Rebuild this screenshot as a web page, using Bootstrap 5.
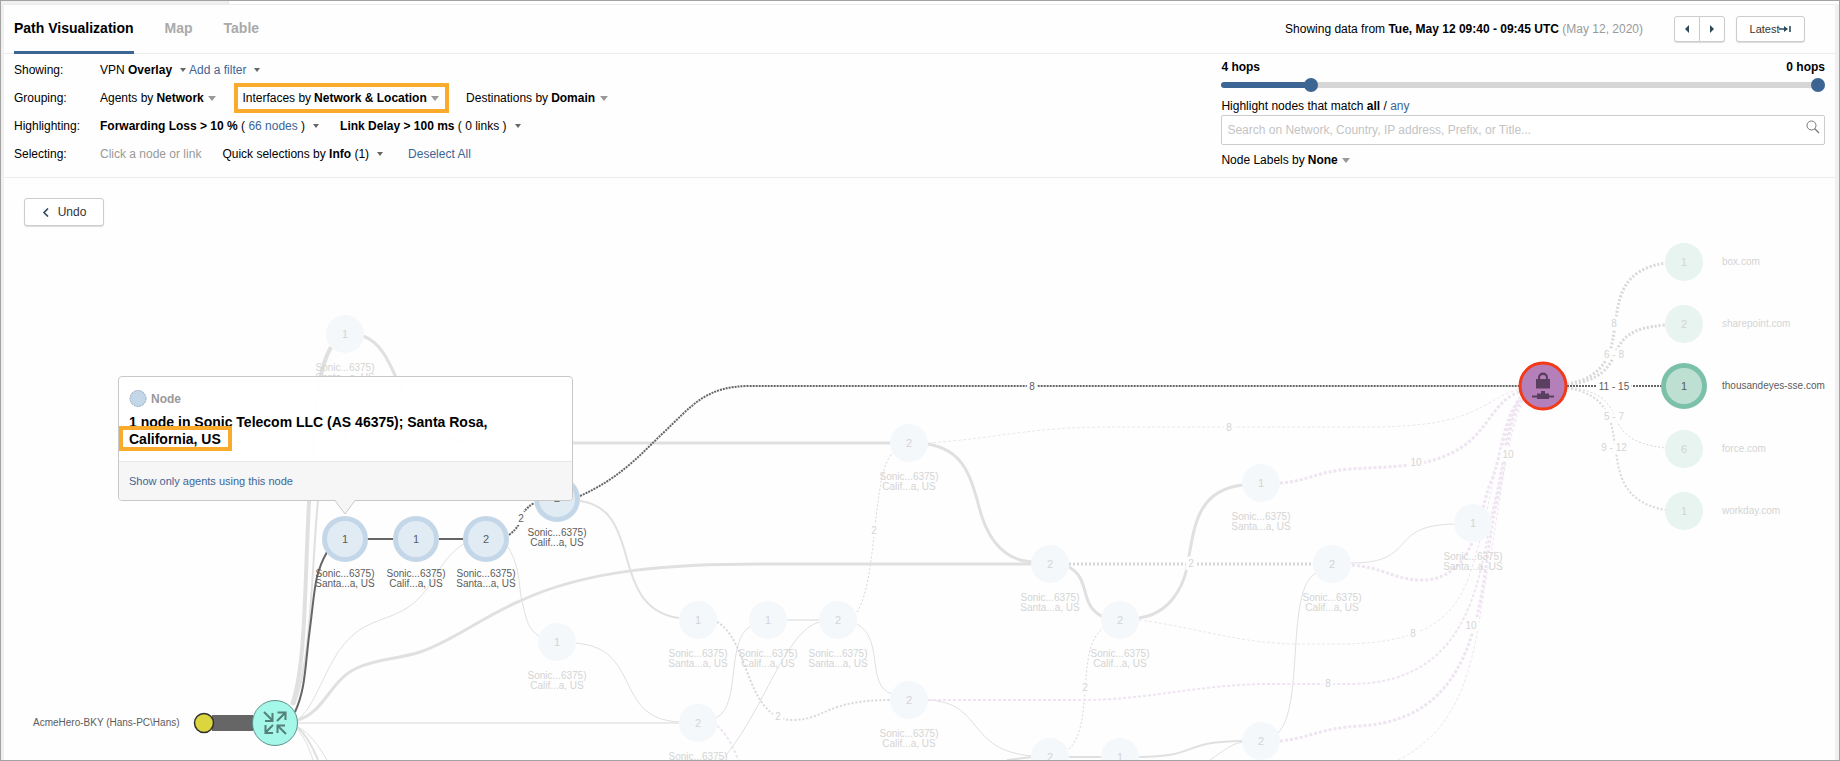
<!DOCTYPE html>
<html lang="en">
<head>
<meta charset="utf-8">
<meta name="viewport" content="width=device-width, initial-scale=1">
<title>Path Visualization</title>
<link rel="stylesheet" href="https://cdn.jsdelivr.net/npm/bootstrap@5.3.0/dist/css/bootstrap.min.css">
<script src="https://cdn.jsdelivr.net/npm/bootstrap@5.3.0/dist/js/bootstrap.bundle.min.js"></script>
<style>
  :root { --accent: #3d6594; --rule: #ebebeb; --mark: #fbab2c; }
  body { font-family: "Liberation Sans", Arial, sans-serif; font-size: 12px; line-height: 16px; color: #000; background: #fff; }
  a, .linkish, .pick.linkish { color: var(--accent); text-decoration: none; }
  .hint { color: #999; }
  .frame { border: 1px solid #a3a3a3; background: #f0f0f0; }
  .top-strip { height: 3px; margin-left: 227px; background: #fff; border-left: 1px solid #e4e4e4; }
  .panel { margin: 0 4px 0 3px; background: #fefefe; border-top: 1px solid var(--rule); }
  .tab-bar { height: 49px; border-bottom: 1px solid var(--rule); padding: 0 30px 0 10px; }
  .view-tabs { gap: 31px; }
  .view-tabs .nav-link { display: flex; align-items: flex-start; height: 49px; padding: 14px 0 0; border: 0; border-bottom: 3px solid transparent; border-radius: 0; background: none; font-size: 14px; font-weight: bold; line-height: 18px; color: #aaa; }
  .view-tabs .nav-link.active { color: #000; border-color: var(--accent); }
  .time-tools { gap: 11px; }
  .tool-btn { --bs-btn-padding-y: 0; --bs-btn-padding-x: 0; --bs-btn-font-size: 12px; --bs-btn-line-height: 16px; --bs-btn-color: #333; --bs-btn-bg: #fff; --bs-btn-border-color: #ccc; --bs-btn-border-radius: 3px; --bs-btn-hover-border-color: #aaa; box-shadow: 0 1px 1px #ddd; display: inline-flex; align-items: center; justify-content: center; }
  .step-btn { width: 26px; height: 26px; }
  .latest-btn { width: 69px; height: 26px; font-size: 11px; }
  .filters { border-bottom: 1px solid var(--rule); padding: 0 10px; }
  .filter-rows { padding: 2px 0 9px; }
  .filter-row { height: 28px; display: flex; align-items: center; }
  .row-name { width: 86px; flex: none; }
  .picks { display: flex; align-items: center; gap: 21px; }
  .picks.tight { gap: 3px; }
  .pick { display: inline-flex; align-items: center; border: 0; padding: 0; background: none; color: #000; white-space: pre; line-height: 16px; }
  .pick select { appearance: none; border: 0; padding: 0; margin: 0; background: none; color: #000; font-weight: bold; line-height: 16px; }
  .pick label { margin-right: 3px; }
  .pick::after { content: ""; margin-left: 4px; border: 4px solid transparent; border-top: 5px solid #999; border-bottom: 0; }
  .pick.small-caret::after { margin-left: 8px; border-width: 4px 3px 0; border-top-color: #666; }
  .pick.ringed { border: 4px solid var(--mark); padding: 3px 6px 3px 4px; height: 30px; margin: 0 -4px 0 -3px; }
  .side { flex: 0 0 604px; flex-basis: calc(33% + 6px); padding-top: 5px; }
  .hops { display: grid; height: 20px; align-items: center; }
  .hops > * { grid-area: 1 / 1; }
  .hops .track { height: 6px; border-radius: 3px; background: linear-gradient(90deg, var(--accent) var(--from), #d6d6d6 var(--from)); }
  .hops input { appearance: none; width: 100%; height: 14px; margin: 0; background: none; pointer-events: none; }
  .hops input::-webkit-slider-thumb { appearance: none; width: 14px; height: 14px; border: 0; border-radius: 50%; background: var(--accent); pointer-events: auto; }
  .match-line { height: 20px; padding-top: 2px; }
  .search-box { height: 30px; border: 1px solid #ccc; border-radius: 2px; background: #fff; padding: 0 4px 0 5px; }
  .search-box input { border: 0; outline: 0; padding: 0; background: none; font-size: 12px; }
  .search-box input::placeholder { color: #c4c4c4; opacity: 1; }
  .labels-by { margin-top: 7px; }
  .canvas svg.graph { display: block; width: 100%; height: auto; }
  .undo-btn { left: 20px; top: 20px; width: 80px; height: 28px; }
  .graph { fill: #5c5c5c; }
  .graph text { font-size: 10px; text-anchor: middle; }
  .graph .num text { font-size: 11px; }
  .graph .dim { fill: #d4d4d4; }
  .graph .gap text { stroke: #fefefe; stroke-width: 6px; paint-order: stroke; }
  .graph .start text { text-anchor: start; }
  .node-tip { left: 114px; top: 198px; width: 455px; height: 125px; border: 1px solid #c8c8c8; border-radius: 4px; background: rgba(255,255,255,.95); }
  .tip-main { height: 85px; padding: 13px 10px 0; border-bottom: 1px solid #e8e8e8; }
  .tip-kind { font-weight: bold; color: #999; }
  .tip-title { font-size: 14px; line-height: 17px; font-weight: bold; margin: 7px 60px 0 0; }
  .tip-title span { box-shadow: 0 0 0 4px var(--mark); margin-left: -6px; padding: 1px 7px 0 6px; }
  .tip-foot { height: 38px; padding: 0 10px; background: #f6f6f6; font-size: 11px; border-radius: 0 0 3px 3px; }
  .tip-arrow { left: 216px; top: 122px; }
</style>
</head>
<body>
<div class="frame overflow-hidden">
  <div class="top-strip"></div>
  <main class="panel">
    <header class="tab-bar d-flex justify-content-between">
      <ul class="nav view-tabs" role="tablist">
        <li class="nav-item"><button class="nav-link active" type="button" role="tab" aria-selected="true">Path Visualization</button></li>
        <li class="nav-item"><button class="nav-link" type="button" role="tab">Map</button></li>
        <li class="nav-item"><button class="nav-link" type="button" role="tab">Table</button></li>
      </ul>
      <div class="time-tools d-flex align-items-center">
        <span class="me-3">Showing data from <b>Tue, May 12 09:40 - 09:45 UTC</b> <span class="hint">(May 12, 2020)</span></span>
        <div class="btn-group ms-1" role="group" aria-label="Step through time">
          <button class="btn tool-btn step-btn" type="button" aria-label="Previous"><svg width="6" height="8"><path d="M5 0V8L1 4Z" fill="#2c4a58"/></svg></button>
          <button class="btn tool-btn step-btn" type="button" aria-label="Next"><svg width="6" height="8"><path d="M1 0V8L5 4Z" fill="#2c4a58"/></svg></button>
        </div>
        <button class="btn tool-btn latest-btn" type="button">Latest<svg width="12" height="8"><path d="M0 4H8M11 1V7" stroke="#2c4a58" stroke-width="1.6"/><path d="M5 1L9 4L5 7Z" fill="#2c4a58"/></svg></button>
      </div>
    </header>

    <section class="filters d-flex justify-content-between">
      <div class="filter-rows">
        <div class="filter-row"><span class="row-name">Showing:</span>
          <div class="picks tight">
            <button class="pick small-caret" type="button">VPN <b>Overlay</b></button>
            <button class="pick small-caret linkish" type="button">Add a filter</button>
          </div></div>
        <div class="filter-row"><span class="row-name">Grouping:</span>
          <div class="picks">
            <span class="pick"><label for="agents">Agents by</label><select id="agents"><option>Network</option></select></span>
            <span class="pick ringed"><label for="ifaces">Interfaces by</label><select id="ifaces"><option>Network &amp; Location</option></select></span>
            <span class="pick"><label for="dests">Destinations by</label><select id="dests"><option>Domain</option></select></span>
          </div></div>
        <div class="filter-row"><span class="row-name">Highlighting:</span>
          <div class="picks">
            <button class="pick small-caret" type="button"><b>Forwarding Loss &gt; 10 %</b> ( <span class="linkish">66 nodes</span> )</button>
            <button class="pick small-caret" type="button"><b>Link Delay &gt; 100 ms</b> ( 0 links )</button>
          </div></div>
        <div class="filter-row"><span class="row-name">Selecting:</span>
          <div class="picks">
            <span class="hint">Click a node or link</span>
            <button class="pick small-caret" type="button">Quick selections by <b>Info</b> (1)</button>
            <a class="ms-1" href="#">Deselect All</a>
          </div></div>
      </div>
      <div class="side">
        <div class="d-flex justify-content-between fw-bold"><span>4 hops</span><span>0 hops</span></div>
        <div class="hops">
          <div class="track" style="--from:14%"></div>
          <input type="range" min="0" max="100" value="14" aria-label="Hops from agents">
          <input type="range" min="0" max="100" value="100" aria-label="Hops from destinations">
        </div>
        <div class="match-line d-flex align-items-center"><label for="q">Highlight nodes that match <b>all</b> / <a href="#">any</a></label></div>
        <div class="search-box d-flex">
          <input id="q" class="flex-grow-1" type="search" placeholder="Search on Network, Country, IP address, Prefix, or Title...">
          <svg class="mt-1" width="14" height="14" fill="none" stroke="#777"><circle cx="5.5" cy="5.5" r="4.5"/><path d="M8.5 8.5L13 13" stroke-width="1.3"/></svg>
        </div>
        <div class="pick labels-by"><label for="nlabels">Node Labels by</label><select id="nlabels"><option>None</option></select></div>
      </div>
    </section>

    <section class="canvas position-relative">
      <svg class="graph" viewBox="4 178 1831 582" role="img" aria-label="Network path graph">
        <defs>
          <circle id="hop" r="19" fill="#f4f8fb"/>
          <circle id="dest" r="19" fill="#e7f4f0"/>
          <circle id="lit" r="20.5" fill="#e1ebf4" stroke="#c3d7e8" stroke-width="5"/>
          <g id="santa"><text y="37">Sonic...6375)</text><text y="47">Santa...a, US</text></g>
          <g id="calif"><text y="37">Sonic...6375)</text><text y="47">Calif...a, US</text></g>
        </defs>

        <!-- solid links that are not selected -->
        <g fill="none" stroke="#e0e0e0">
          <path stroke-width="4" d="M292 705C308 660 304 560 311 470C316 400 318 370 331 347"/>
          <path stroke-width="2" d="M294 705C312 660 312 560 318 500C322 470 322 452 329 443M363 437C385 442 395 450 404 464"/>
          <path stroke-width="3" d="M363 336C386 344 393 374 405 397S440 443 480 443H891"/>
          <path d="M298 720C320 700 325 660 353 635C370 620 388 620 407 608C435 590 435 562 465 543"/>
          <path stroke-width="3" d="M298 720C325 712 330 680 357 668C380 658 395 660 420 652C455 640 480 618 520 601C590 568 680 564 760 564H1032"/>
          <path stroke="#ebebeb" stroke-width="2" d="M298 723H679M787 620H820"/>
          <path stroke-width="2" d="M297 727C307 735 313 748 318 760"/>
          <path d="M297 729C305 738 309 748 313 760M298 727C310 733 320 748 327 760"/>
          <path d="M508 547C522 570 518 590 523 605C527 624 530 630 539 636"/>
          <path stroke-width="2" d="M580 501C610 505 618 528 625 552C632 578 640 613 679 618"/>
          <path d="M576 643C608 646 617 662 627 682C637 702 645 720 679 722"/>
          <path d="M716 718C742 705 725 640 751 626"/>
          <path d="M722 760C765 710 785 630 820 622"/>
          <path d="M857 624C885 640 865 685 892 694"/>
          <path d="M928 700C985 703 965 750 1032 756"/>
          <path stroke-width="3" d="M928 444C963 450 970 475 978 503C985 533 1000 560 1032 562"/>
          <path stroke-width="3" d="M1069 567C1092 580 1078 605 1103 617"/>
          <path stroke-width="3" d="M1139 618C1168 614 1182 590 1187 568C1194 530 1195 490 1243 485"/>
          <path d="M1351 563C1420 563 1385 525 1455 524"/>
          <path d="M1278 733C1305 705 1285 590 1316 573"/>
          <path stroke-width="2" d="M1007 760L1032 757H1139C1200 757 1180 741 1243 741"/>
          <path d="M1210 760C1222 752 1230 744 1243 742"/>
        </g>
        <!-- dashed links that are not selected -->
        <g fill="none" stroke="#d8d8d8" stroke-dasharray="2 2">
          <path stroke-width="2" d="M717 622C750 640 745 720 793 720C825 720 825 700 891 700"/>
          <path d="M857 612C878 580 872 470 893 453"/>
          <path stroke-width="3" d="M1069 564H1314"/>
          <path d="M1069 749C1095 725 1075 645 1104 628"/>
          <path stroke-width="3" d="M1567 384C1650 370 1580 275 1666 263"/>
          <path stroke-width="3" d="M1567 385C1640 375 1590 330 1666 325"/>
          <path d="M1567 387C1640 395 1590 440 1666 448"/>
          <path stroke-width="2" d="M1567 388C1650 400 1580 495 1666 510"/>
        </g>
        <!-- links that enter the tunnel -->
        <g fill="none" stroke="#efe4f1" stroke-dasharray="3 2">
          <path stroke-width="2" d="M717 726C725 732 733 745 738 760"/>
          <path stroke-width="2" d="M928 700H1080C1150 700 1200 684 1270 684H1350C1480 684 1480 560 1495 500C1507 450 1505 420 1521 398"/>
          <path d="M928 443C1000 438 1030 427 1110 427H1370C1480 427 1480 400 1520 389"/>
          <path stroke-width="3" d="M1280 483C1305 482 1315 472 1350 469C1380 467 1410 467 1430 461C1490 445 1485 405 1519 392"/>
          <path d="M1139 620C1200 628 1240 644 1300 644H1340C1460 644 1465 590 1480 540C1500 460 1500 420 1520 397"/>
          <path stroke-width="3" d="M1352 565C1385 568 1395 580 1422 580C1480 580 1480 500 1492 480C1505 440 1505 420 1520 398"/>
          <path stroke-width="3" d="M1280 741C1310 738 1320 728 1360 726C1490 718 1478 580 1497 500C1508 450 1508 420 1522 400"/>
          <path d="M1398 760C1480 720 1475 620 1490 560C1500 500 1508 430 1523 402"/>
        </g>
        <!-- the selected path -->
        <g fill="none" stroke="#666" stroke-width="2">
          <path d="M295 712C306 688 305 665 310 628C315 590 314 575 327 552M367 539H393M439 539H463"/>
          <path stroke-dasharray="2 1" d="M509 535C528 520 515 515 534 503M580 496C620 478 640 455 662 434C692 406 705 386 750 386H1519M1567 386H1662"/>
          <path stroke-width="16" d="M212 723H253"/>
        </g>

        <use href="#hop" x="345" y="334"/><use href="#hop" x="345" y="435"/><use href="#hop" x="557" y="642"/>
        <use href="#hop" x="698" y="620"/><use href="#hop" x="768" y="620"/><use href="#hop" x="838" y="620"/>
        <use href="#hop" x="698" y="723"/><use href="#hop" x="909" y="443"/><use href="#hop" x="909" y="700"/>
        <use href="#hop" x="1050" y="564"/><use href="#hop" x="1120" y="620"/><use href="#hop" x="1261" y="483"/>
        <use href="#hop" x="1332" y="564"/><use href="#hop" x="1473" y="523"/><use href="#hop" x="1261" y="741"/>
        <use href="#hop" x="1050" y="757"/><use href="#hop" x="1120" y="757"/>
        <use href="#dest" x="1684" y="262"/><use href="#dest" x="1684" y="324"/><use href="#dest" x="1684" y="449"/><use href="#dest" x="1684" y="511"/>
        <use href="#lit" x="345" y="539"/><use href="#lit" x="416" y="539"/><use href="#lit" x="486" y="539"/><use href="#lit" x="557" y="499"/>
        <circle cx="1684" cy="386" r="20.5" fill="#bde0d3" stroke="#7bc0a9" stroke-width="5"/>

        <g class="dim num">
          <text x="345" y="338">1</text><text x="345" y="439">1</text><text x="557" y="646">1</text><text x="698" y="624">1</text><text x="768" y="624">1</text><text x="838" y="624">2</text>
          <text x="698" y="727">2</text><text x="909" y="447">2</text><text x="909" y="704">2</text><text x="1050" y="568">2</text><text x="1120" y="624">2</text><text x="1261" y="487">1</text>
          <text x="1332" y="568">2</text><text x="1473" y="527">1</text><text x="1261" y="745">2</text><text x="1050" y="761">2</text><text x="1120" y="761">1</text>
          <text x="1684" y="266">1</text><text x="1684" y="328">2</text><text x="1684" y="453">6</text><text x="1684" y="515">1</text>
        </g>
        <g class="num">
          <text x="345" y="543">1</text><text x="416" y="543">1</text><text x="486" y="543">2</text><text x="557" y="502">2</text><text x="1684" y="390">1</text>
        </g>
        <g class="dim">
          <use href="#santa" x="345" y="334"/><use href="#calif" x="557" y="642"/><use href="#santa" x="698" y="620"/><use href="#calif" x="768" y="620"/><use href="#santa" x="838" y="620"/>
          <use href="#santa" x="698" y="723"/><use href="#calif" x="909" y="443"/><use href="#calif" x="909" y="700"/><use href="#santa" x="1050" y="564"/><use href="#calif" x="1120" y="620"/>
          <use href="#santa" x="1261" y="483"/><use href="#calif" x="1332" y="564"/><use href="#santa" x="1473" y="523"/>
        </g>
        <use href="#santa" x="345" y="540"/><use href="#calif" x="416" y="540"/><use href="#santa" x="486" y="540"/><use href="#calif" x="557" y="499"/>

        <g class="dim gap">
          <text x="778" y="720">2</text><text x="874" y="534">2</text><text x="1229" y="431">8</text><text x="1191" y="567">2</text><text x="1085" y="691">2</text>
          <text x="1328" y="687">8</text><text x="1413" y="637">8</text><text x="1416" y="466">10</text><text x="1508" y="458">10</text><text x="1471" y="629">10</text>
          <text x="1614" y="327">8</text><text x="1614" y="358">6 - 8</text><text x="1614" y="420">5 - 7</text><text x="1614" y="451">9 - 12</text>
        </g>
        <g class="gap"><text x="521" y="522">2</text><text x="1032" y="390">8</text><text x="1614" y="390">11 - 15</text></g>
        <g class="dim start"><text x="1722" y="265">box.com</text><text x="1722" y="327">sharepoint.com</text><text x="1722" y="452">force.com</text><text x="1722" y="514">workday.com</text></g>
        <g class="start"><text x="1722" y="389">thousandeyes-sse.com</text><text x="33" y="726">AcmeHero-BKY (Hans-PC\Hans)</text></g>

        <circle cx="204" cy="723" r="9.5" fill="#dbd63e" stroke="#2f2f2f" stroke-width="1.5"/>
        <circle cx="275" cy="723" r="22.5" fill="#a5f7e9" stroke="#5d8f88"/>
        <g fill="none" stroke="#557f79" stroke-width="2">
          <path d="M264 712L272 720M272.500 713V721H265"/>
          <path d="M277 721L285 713M277.500 712.500H285.500V720"/>
          <path d="M273 725L265 733M265.500 725V733H273"/>
          <path d="M286 734L278 726M277.500 733V725.500H285"/>
        </g>
        <circle cx="1543" cy="386" r="23" fill="#b57fb9" stroke="#f23a18" stroke-width="3"/>
        <g fill="#5b3f61">
          <path d="M1536 379H1538V377.500A5 5 0 0 1 1548 377.500V379H1550V388.500H1536Z"/>
          <path fill="#b57fb9" d="M1540 379V378A3 3 0 0 1 1546 378V379Z"/>
          <path d="M1541 391H1545V393.500H1549V395.500H1554V397.500H1549V399H1537V397.500H1532V395.500H1537V393.500H1541Z"/>
        </g>
      </svg>

      <button class="btn tool-btn undo-btn position-absolute" type="button"><svg class="me-2" width="8" height="9" fill="none" stroke="#2c4a58" stroke-width="1.6"><path d="M6 .5L2 4.500L6 8.500"/></svg>Undo</button>

      <div class="node-tip position-absolute" role="tooltip">
        <div class="tip-main">
          <div class="tip-kind d-flex align-items-center"><svg class="me-1" width="18" height="17"><circle cx="9" cy="8.5" r="8" fill="#c3d7e8" stroke="#8fa3b8" stroke-dasharray="2 1"/></svg>Node</div>
          <div class="tip-title">1 node in Sonic Telecom LLC (AS 46375); Santa Rosa, <span>California, US</span></div>
        </div>
        <div class="tip-foot d-flex align-items-center"><a href="#">Show only agents using this node</a></div>
        <svg class="tip-arrow position-absolute" width="20" height="17"><path d="M0 0H20V1L10 15L0 1Z" fill="#f6f6f6"/><path d="M0 1.500L10 15L20 1.500" fill="none" stroke="#c8c8c8"/></svg>
      </div>
    </section>
  </main>
</div>
</body>
</html>
